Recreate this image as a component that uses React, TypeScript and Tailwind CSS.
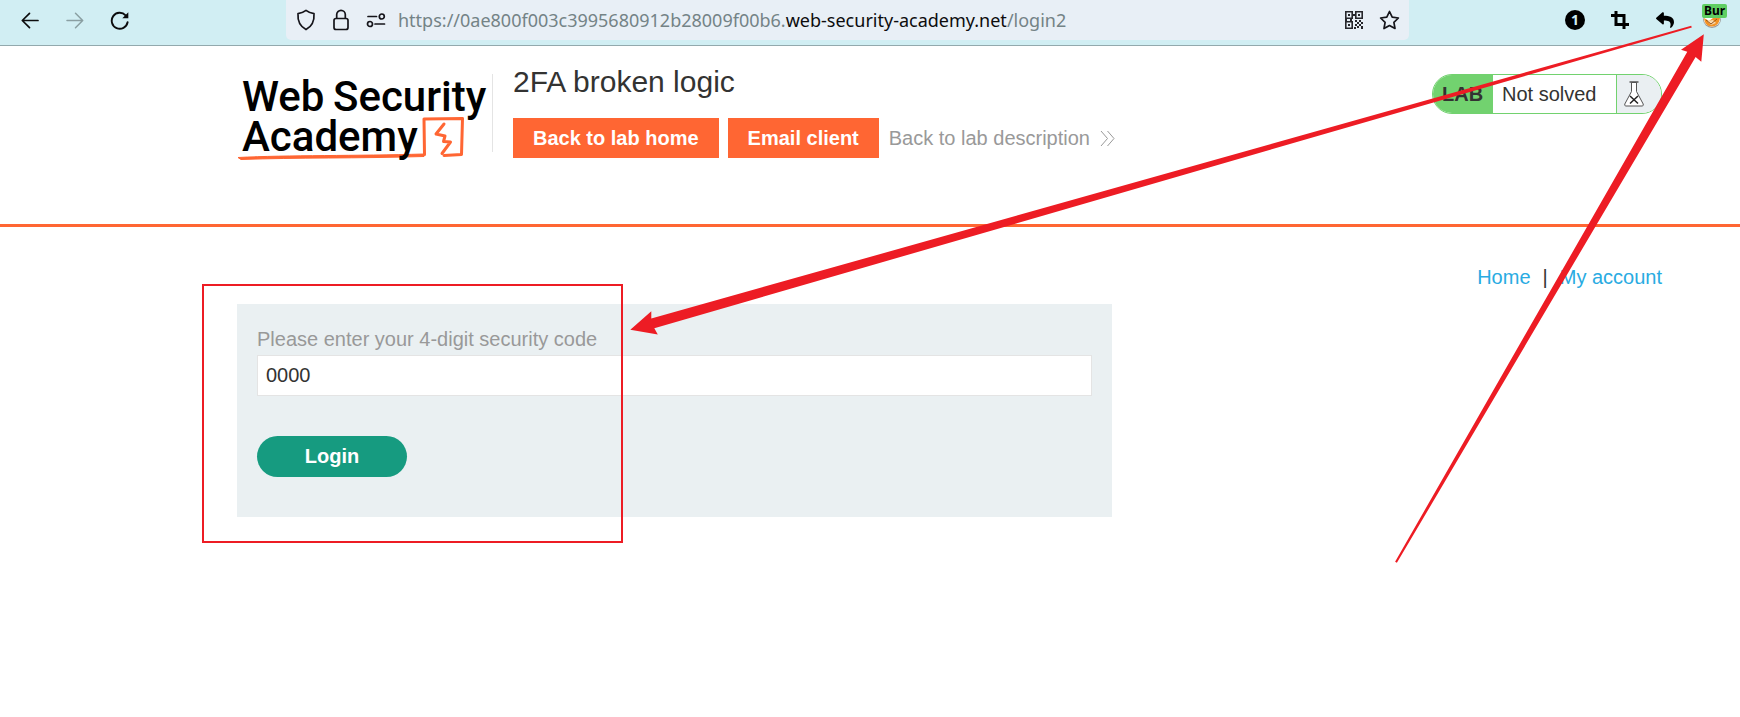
import React from "react";
import { FaReply } from "react-icons/fa";

const iconButton = "flex size-6 items-center justify-center";

function BrowserBar() {
  return (
    <div className="flex h-[46px] items-start border-b border-[#93a9ad] bg-[#d1eef3] pl-[18px] pr-3">
      <div className="flex h-10 shrink-0 items-center gap-[21px]">
        <button type="button" aria-label="Back" className={iconButton}>
          <svg width="18" height="18" viewBox="0 0 18 18" fill="none" stroke="#0c0c0d" strokeWidth="1.7" strokeLinecap="round" strokeLinejoin="round">
            <path d="M17 9.500H1.500M8.500 2.300L1.300 9.500l7.200 7.200" />
          </svg>
        </button>
        <button type="button" aria-label="Forward" className={iconButton}>
          <svg width="18" height="18" viewBox="0 0 18 18" fill="none" stroke="#8a9fa2" strokeWidth="1.5" strokeLinecap="round" strokeLinejoin="round">
            <path d="M1 9.500h15.500M9.500 2.300l7.200 7.200-7.200 7.200" />
          </svg>
        </button>
        <button type="button" aria-label="Reload" className={iconButton}>
          <svg width="20" height="20" viewBox="0 0 20 20" fill="none" stroke="#0c0c0d" strokeWidth="1.9" strokeLinecap="round">
            <path d="M17.600 12.300A8 8 0 1 1 15.600 5.300" />
            <path d="M18.300 2.200v6h-6z" fill="#0c0c0d" stroke="none" />
          </svg>
        </button>
      </div>

      <div className="ml-[154px] flex h-10 min-w-0 flex-1 items-center rounded-b-[5px] bg-[#e8eff6] pl-[10px] pr-2">
        <svg className="shrink-0" width="20" height="22" viewBox="0 0 20 22" fill="none" stroke="#15141a" strokeWidth="1.7" strokeLinejoin="round">
          <path d="M10 1.4c2.3 1.8 4.800 2.800 8 3.200.5 7-1.800 12.600-8 16C3.800 17.200 1.500 11.600 2 4.600c3.200-.4 5.700-1.400 8-3.200z" />
        </svg>
        <svg className="ml-[17px] shrink-0" width="16" height="22" viewBox="0 0 16 22" fill="none" stroke="#15141a" strokeWidth="1.7">
          <rect x="1" y="9.500" width="14" height="11" rx="2" />
          <path d="M3.700 9.500V5.600a4.300 4.300 0 0 1 8.600 0v3.900" />
        </svg>
        <svg className="ml-[17px] shrink-0" width="20" height="16" viewBox="0 0 20 16" fill="none" stroke="#15141a" strokeWidth="1.7" strokeLinecap="round">
          <path d="M2 4.500h8.500M9 12h9.500" />
          <circle cx="15.800" cy="4.500" r="2.500" />
          <circle cx="4" cy="12" r="2.500" />
        </svg>
        <p className="ml-3 min-w-0 flex-1 truncate font-['Noto_Sans',sans-serif] text-[18px] leading-7 text-[#748386]">
          https://0ae800f003c3995680912b28009f00b6.
          <span className="text-[#0c0c0d]">web-security-academy.net</span>/login2
        </p>
        <button type="button" aria-label="QR code" className={iconButton}>
          <svg width="18" height="18" viewBox="0 0 18 18" fill="#26262b">
            <path fillRule="evenodd" d="M0 0h8v3h2V0h8v8h-8V5H8v3H0zM1.600 1.600v4.800h4.800V1.600zM11.600 1.600v4.800h4.800V1.600zM0 10h8v8H0zM1.600 11.600v4.800h4.800v-4.800z" />
            <path d="M3 3h2v2H3zM13 3h2v2h-2zM3 13h2v2H3zM0 8h2v2H0zM5 8h2v2H5zM10 9h2v2h-2zM14 9h2v2h-2zM12 11h2v2h-2zM16 11h2v2h-2zM10 13h2v2h-2zM14 13h2v2h-2zM12 15h2v2h-2zM16 15h2v3h-2zM9 16h2v2H9z" />
          </svg>
        </button>
        <button type="button" aria-label="Bookmark this page" className={iconButton + " ml-[11px]"}>
          <svg width="21" height="20" viewBox="0 0 21 20" fill="none" stroke="#15141a" strokeWidth="1.700" strokeLinejoin="round">
            <path d="M10.500 1.500l2.700 5.700 6.200.8-4.500 4.300 1.100 6.200-5.500-3-5.500 3 1.100-6.200L1.600 8l6.200-.8z" />
          </svg>
        </button>
      </div>

      <div className="ml-[154px] flex h-10 shrink-0 items-center gap-[21px]">
        <button type="button" aria-label="Notifications" className={iconButton}>
          <span className="flex size-5 items-center justify-center rounded-full bg-black font-['Noto_Sans',sans-serif] text-[14px] font-bold leading-5 text-[#d1eef3]">1</span>
        </button>
        <button type="button" aria-label="Capture" className={iconButton}>
          <svg width="18" height="18" viewBox="0 0 18 18" fill="none" stroke="#000" strokeWidth="3">
            <path d="M5 0v13.500h13M0 4.500h13V18" />
          </svg>
        </button>
        <button type="button" aria-label="Undo" className={iconButton}>
          <FaReply size={18} color="#000" />
        </button>
        <button type="button" aria-label="Proxy: Burp" className="relative flex h-6 w-[30px] items-center justify-center">
          <svg width="20" height="20" viewBox="0 0 20 20">
            <circle cx="9" cy="9" r="9" fill="#9d9a98" />
            <circle cx="9" cy="8.500" r="8.300" fill="#fff" />
            <path d="M1 8l5 3 4-3 7-1c0 5-3 9.500-8 9.500S1.500 13 1 8z" fill="#f39325" />
            <path d="M4 11l4 4 5-2-3-3z" fill="#f8d9ae" />
            <path d="M3 10l5 4 6-5" fill="none" stroke="#9b5317" />
          </svg>
          <span className="absolute -top-1 left-1 h-[14px] w-[25px] rounded-[2px] bg-[#5fce62] text-center font-['Noto_Sans',sans-serif] text-[12px] font-bold leading-[14px] text-black">Bur</span>
        </button>
      </div>
    </div>
  );
}

function AcademyLogo() {
  return (
    <svg className="mt-[5px] shrink-0" width="255" height="96" viewBox="0 -6 255 96" role="img" aria-label="Web Security Academy">
      <g fill="none" stroke="#ff6633" strokeWidth="3" strokeLinecap="round" strokeLinejoin="round">
        <path d="M187.500 80.500L187 45 225.500 44.500 224.500 80.500 207 81.500" />
        <path d="M207 50l-8 10 9 2-1.500 5.500 7 .5-8.500 11.500" />
      </g>
      <path d="M1 83.500C50 81 120 82 187 80v2.500C120 84.500 60 83.500 4 85.500z" fill="#ff6633" stroke="#ff6633" />
      <g fill="#000" fontFamily="Roboto, sans-serif" fontSize="42" fontWeight="500">
        <text x="5" y="37">Web</text>
        <text x="96" y="37">Security</text>
        <text x="5" y="77">Academy</text>
      </g>
    </svg>
  );
}

function LabHeader() {
  return (
    <header className="flex items-start border-b-[3px] border-[#ff6633] pb-[60px] pl-[237px] pr-[78px] pt-[17px]">
      <AcademyLogo />
      <div className="mt-[11px] h-[78px] w-px shrink-0 bg-[#e4e4e4]" />
      <div className="ml-5 flex-1">
        <h2 className="text-[30px] leading-[38px] text-[#333332]">2FA broken logic</h2>
        <div className="mt-[17px] flex items-center">
          <a href="#home" className="bg-[#ff6633] px-5 font-bold leading-10 text-white">Back to lab home</a>
          <a href="#email" className="ml-[9px] bg-[#ff6633] px-5 font-bold leading-10 text-white">Email client</a>
          <a href="#description" className="ml-[10px] flex items-center gap-[10px] leading-10 text-[#999]">
            Back to lab description
            <svg width="15" height="17" viewBox="0 0 15 17" fill="none" stroke="#999" strokeWidth="1">
              <path d="M1 1l6.500 7.500L1 16M7.500 1L14 8.500 7.500 16" />
            </svg>
          </a>
        </div>
      </div>
      <div className="mt-[11px] flex h-10 w-[230px] shrink-0 overflow-hidden rounded-[20px] border border-[#72d26f]">
        <span className="w-[60px] bg-[#72d26f] pl-[9px] font-bold leading-[38px] text-[#333332]">LAB</span>
        <p className="flex-1 bg-white pl-[9px] leading-[38px] text-[#333332]">Not solved</p>
        <span className="flex w-[45px] items-center border-l border-[#72d26f] bg-[#eaeff2] pl-[7px]">
          <svg width="20" height="26" viewBox="0 0 20 26" fill="#fff" stroke="#555" strokeWidth="1">
            <path d="M7.500 1.500v9L.8 23q-.6 1.800 1 2h16.400q1.600-.2 1-2L12.500 10.500v-9z" />
            <path d="M5.500 1h9" strokeWidth="1.500" />
            <path d="M6 15l8 7.500M14 15l-8 7.500" stroke="#222" strokeWidth="1.500" />
          </svg>
        </span>
      </div>
    </header>
  );
}

function Annotations() {
  return (
    <svg className="pointer-events-none absolute left-0 top-0" width="1740" height="600" viewBox="0 0 1740 600" fill="#ed1c24" aria-hidden="true">
      <rect x="203" y="285" width="419" height="257" fill="none" stroke="#ed1c24" strokeWidth="2" />
      <path d="M630.300 329.800L651.300 311.300V318.500L1691.200 25.800 1691.800 27.600 654.300 328.300 657.800 334.500z" />
      <path d="M1703.800 34.300L1681 49.800 1687.300 51.800 1395.100 561.800 1396.900 562.800 1695.600 57 1701.300 61.700z" />
    </svg>
  );
}

export default function App() {
  return (
    <div className="relative min-h-screen overflow-x-hidden bg-white font-['Liberation_Sans',Arial,sans-serif] text-[20px]">
      <BrowserBar />
      <LabHeader />
      <main className="pl-[237px] pr-[78px] pt-[38px]">
        <nav className="flex justify-end leading-6 text-[#29abe2]">
          <a href="#home">Home</a>
          <span className="mx-3 text-[#333332]">|</span>
          <a href="#account">My account</a>
        </nav>
        <form className="mt-[15px] w-full max-w-[875px] bg-[#eaf0f2] px-5 pb-10 pt-5" onSubmit={(e) => e.preventDefault()}>
          <label htmlFor="code" className="block leading-[31px] text-[#999]">Please enter your 4-digit security code</label>
          <input id="code" type="text" defaultValue="0000" className="block h-[41px] w-full border border-[#e4e4e4] bg-white px-2 text-[#333332] outline-none" />
          <button type="submit" className="mt-10 block h-[41px] w-[150px] rounded-full bg-[#169b80] pb-0.5 font-bold text-white">Login</button>
        </form>
      </main>
      <Annotations />
    </div>
  );
}
